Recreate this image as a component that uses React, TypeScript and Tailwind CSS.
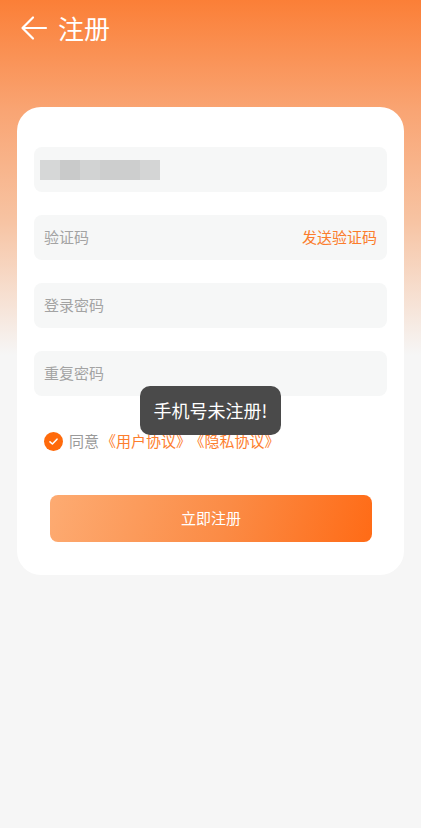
import { useState } from "react";

function BackArrow() {
  return (
    <svg width="28" height="28" viewBox="0 0 28 28" fill="none">
      <path
        d="M26 14H3M13 3.5L2.5 14L13 24.5"
        stroke="white"
        strokeWidth="2.2"
        strokeLinecap="round"
        strokeLinejoin="round"
      />
    </svg>
  );
}

function Field({ placeholder, children }: { placeholder?: string; children?: React.ReactNode }) {
  return (
    <div className="flex h-[45px] items-center justify-between rounded-[8px] bg-[#f6f7f7] px-[10px]">
      {placeholder ? <span className="text-[15px] text-[#a3a3a3]">{placeholder}</span> : null}
      {children}
    </div>
  );
}

export default function App() {
  const [agreed, setAgreed] = useState(true);

  return (
    <div
      className="relative min-h-[828px] w-full bg-[linear-gradient(180deg,#fb7f37_0px,#f9a574_112px,#f7c3a2_220px,#f6f6f6_355px)] pb-10"
      style={{ fontFamily: '"Noto Sans CJK SC", "Noto Sans", sans-serif' }}
    >
      <div className="flex h-[56px] items-center gap-[10px] pl-[20px]">
        <BackArrow />
        <span className="text-[26px] leading-none text-white">注册</span>
      </div>

      <div className="mx-[17px] mt-[51px] rounded-[24px] bg-white px-[17px] pb-[33px] pt-[40px]">
        <div className="flex flex-col gap-[23px]">
          <div className="flex h-[45px] items-center rounded-[8px] bg-[#f6f7f7] px-[6px]">
            <div className="flex h-[20px]">
              <div className="w-[20px] bg-[#d6d7d7]" />
              <div className="w-[20px] bg-[#c9caca]" />
              <div className="w-[20px] bg-[#d2d3d3]" />
              <div className="w-[40px] bg-[#cdcece]" />
              <div className="w-[20px] bg-[#d4d5d5]" />
            </div>
          </div>
          <Field placeholder="验证码">
            <span className="text-[15px] text-[#fb7d2c]">发送验证码</span>
          </Field>
          <Field placeholder="登录密码" />
          <Field placeholder="重复密码" />
        </div>

        <div className="mt-[34px] flex items-center gap-[6px] pl-[10px]">
          <button
            onClick={() => setAgreed(!agreed)}
            className={`flex h-[19px] w-[19px] items-center justify-center rounded-full ${agreed ? "bg-[#ff6a0b]" : "border border-[#ccc] bg-white"}`}
          >
            {agreed ? (
              <svg width="11" height="11" viewBox="0 0 11 11" fill="none">
                <path d="M2 5.8L4.4 8L9 3.2" stroke="white" strokeWidth="1.6" strokeLinecap="round" strokeLinejoin="round" />
              </svg>
            ) : null}
          </button>
          <span className="text-[15px] text-[#9a9a9a]">
            同意
            <span className="ml-[2px] text-[#fd7e2d]">《用户协议》</span>
            <span className="ml-[6px] text-[#fd7e2d]">《隐私协议》</span>
          </span>
        </div>

        <button className="mx-[16px] mt-[42px] flex h-[47px] w-[322px] items-center justify-center rounded-[8px] bg-[linear-gradient(105deg,#fdab72_0%,#fb8b45_55%,#ff6b16_100%)] text-[15px] text-white">
          立即注册
        </button>
      </div>

      <div className="absolute left-[140px] top-[386px] flex h-[49px] w-[141px] items-center justify-center rounded-[10px] bg-[#4a4a4a] text-[18px] text-white">
        手机号未注册!
      </div>
    </div>
  );
}
